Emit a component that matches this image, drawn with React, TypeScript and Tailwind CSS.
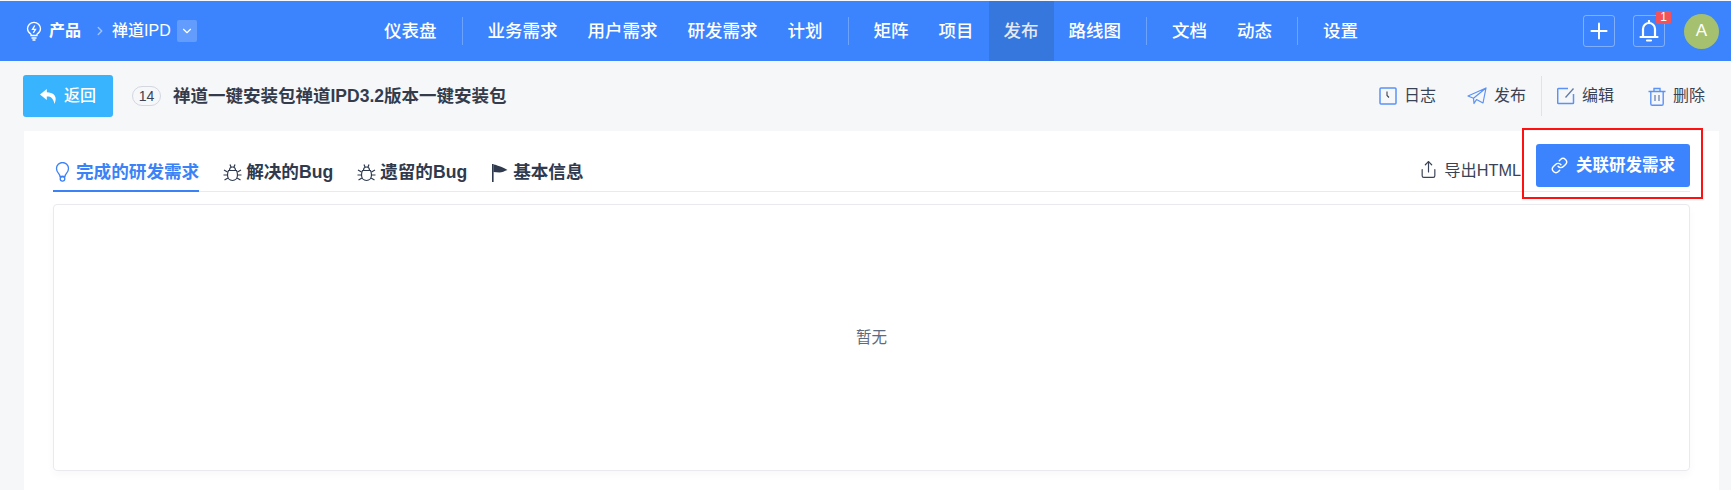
import React from 'react';
import { ChevronDown, ChevronRight, Link, Plus, Share } from 'lucide-react';

const font = { fontFamily: '"Liberation Sans", "Noto Sans CJK SC", sans-serif' };

const NavItem = ({ label, active = false }: { label: string; active?: boolean }) => (
  <a
    className={`h-full flex items-center px-[15px] text-[17.5px] font-medium ${active ? 'bg-[#3577dd] text-[#e4e9f2] font-bold' : 'text-white'}`}
  >
    {label}
  </a>
);

const NavDivider = () => <div className="w-px h-[28px] bg-white/25 mx-[10px]" />;

const ClockSquare = () => (
  <svg width="18" height="18" viewBox="0 0 18 18" fill="none" stroke="#5a92f7" strokeWidth="1.5">
    <rect x="1" y="1" width="16" height="16" rx="1" />
    <path d="M8 4.500v4l2 2" stroke="#3a4355" strokeWidth="1.1" />
  </svg>
);

const PlaneIcon = () => (
  <svg width="20" height="18" viewBox="0 0 20 18" fill="none" stroke="#5a92f7" strokeWidth="1.2" strokeLinejoin="round">
    <path d="M19 1 1 9l5.500 2.200L19 1l-3 15-6.500-3.500L7 16.500l-.5-5.300" />
  </svg>
);

const EditIcon = () => (
  <svg width="18" height="18" viewBox="0 0 18 18" fill="none" stroke="#5a92f7" strokeWidth="1.5">
    <path d="M11 1.500H1.500a.8.8 0 0 0-.8.8v13.400c0 .5.300.8.800.8h14.200c.5 0 .8-.3.800-.8V7" />
    <path d="M16.500 1.500 8.500 10.500" stroke="#5f7aa8" strokeWidth="1.300" />
  </svg>
);

const TrashIcon = () => (
  <svg width="18" height="19" viewBox="0 0 18 19" fill="none" stroke="#5a92f7" strokeWidth="1.4">
    <path d="M.5 4.500h17M6 4.500V1.500h6v3" />
    <path d="M2.800 4.500v12.200c0 1 .6 1.600 1.500 1.600h9.400c.9 0 1.500-.6 1.500-1.600V4.500" />
    <path d="M7 8v6M11 8v6" stroke="#5f7aa8" strokeWidth="1.200" />
  </svg>
);

const BackArrow = () => (
  <svg width="17" height="15" viewBox="0 0 17 15" fill="white">
    <path d="M6.800 0 0 5.600l6.800 5.400V7.600c3.600-.2 6.200.8 7.700 7.400 2.800-6.500.8-11.200-7.700-11.700z" />
  </svg>
);

const BulbBolt = () => (
  <svg width="16" height="20" viewBox="0 0 16 20" fill="none" stroke="white" strokeWidth="1.300">
    <path d="M5 14.500v-1.200C3 12 1.500 10.200 1.500 7.800a6.500 6.500 0 0 1 13 0c0 2.400-1.500 4.200-3.500 5.500v1.200z" />
    <path d="M5.500 17h5M6.500 19h3" />
    <path d="M8.800 4.500 6.500 8.300h3l-2.200 3.500" />
  </svg>
);

const BellIcon = () => (
  <svg width="20" height="22" viewBox="0 0 20 22" fill="none" stroke="white" strokeWidth="2.200">
    <path d="M4 16V9a6 6 0 0 1 12 0v7" />
    <path d="M1.500 17h17" strokeLinecap="round" />
    <path d="M8 20.500h4M10 1v2" strokeLinecap="round" />
  </svg>
);

const BugIcon = () => (
  <svg width="19" height="19" viewBox="0 0 19 19" fill="none" stroke="#2f3a4e" strokeWidth="1.200">
    <path d="M5.500 7.500h8c.8 1.500 1 3 1 4.500 0 3-2 5.500-5 5.500s-5-2.500-5-5.500c0-1.500.2-3 1-4.500z" />
    <path d="M6.500 7.500c0-2 1.200-3.500 3-3.500s3 1.500 3 3.500M7 1.500l1 2.500M12 1.500 11 4" />
    <path d="M1 7l3.500 2M18 7l-3.500 2M.5 12h4M18.500 12h-4M1.500 17l3.500-2M17.500 17 14 15" />
  </svg>
);

const TabBulb = () => (
  <svg width="19" height="20" viewBox="0 0 19 20" fill="none" stroke="#3b82f6" strokeWidth="1.300">
    <path d="M7 14.500c0-3-3.500-3.500-3.500-8a6 6 0 0 1 12 0c0 4.500-3.500 5-3.500 8z" />
    <circle cx="9.500" cy="16.800" r="2.300" />
  </svg>
);

const FlagIcon = () => (
  <svg width="18" height="19" viewBox="0 0 18 19" fill="#2f3a4e">
    <rect x="1" y="1" width="1.600" height="18" />
    <path d="M2.500 1.500c3 0 3.500 1.200 6 1.800 2 .5 4 1.500 8 3.700-3 1-5.500 2.500-8 2.500-2 0-4-.5-6-.5z" />
  </svg>
);

const Action = ({ icon, label }: { icon: React.ReactNode; label: string }) => (
  <button className="flex items-center gap-[7px] text-[16px] text-[#3a4355]">
    {icon}
    <span>{label}</span>
  </button>
);

const Tab = ({ icon, label, active = false }: { icon: React.ReactNode; label: string; active?: boolean }) => (
  <div
    className={`h-[47px] pt-[9px] flex items-center gap-[4px] text-[17.6px] font-bold border-b-2 -mb-px ${
      active ? 'text-[#3b82f6] border-[#3b82f6]' : 'text-[#2f3a4e] border-transparent'
    }`}
  >
    {icon}
    <span>{label}</span>
  </div>
);

export default function App() {
  return (
    <div style={font} className="w-[1731px] h-[490px] overflow-hidden bg-[#f6f7f9]">
      {/* Top nav */}
      <header className="h-[60px] mt-px bg-[#3b84fd] flex items-center relative">
        <div className="w-[369px] pl-[26px] flex items-center text-white text-[16px] shrink-0">
          <BulbBolt />
          <span className="ml-[7px] font-bold">产品</span>
          <ChevronRight size={14} strokeWidth={2.5} className="ml-[12px] mr-[5px] text-white/50" />
          <span className="font-medium">禅道IPD</span>
          <span className="ml-[6px] w-[20px] h-[22px] rounded-[2px] bg-white/20 flex items-center justify-center">
            <ChevronDown size={14} />
          </span>
        </div>
        <nav className="h-full flex items-center flex-1">
          <NavItem label="仪表盘" />
          <NavDivider />
          <NavItem label="业务需求" />
          <NavItem label="用户需求" />
          <NavItem label="研发需求" />
          <NavItem label="计划" />
          <NavDivider />
          <NavItem label="矩阵" />
          <NavItem label="项目" />
          <NavItem label="发布" active />
          <NavItem label="路线图" />
          <NavDivider />
          <NavItem label="文档" />
          <NavItem label="动态" />
          <NavDivider />
          <NavItem label="设置" />
        </nav>
        <div className="flex items-center pr-[12px]">
          <button className="w-[32px] h-[32px] rounded-[3px] border border-white/35 flex items-center justify-center text-white">
            <Plus size={26} strokeWidth={1.8} />
          </button>
          <button className="relative ml-[18px] w-[32px] h-[32px] rounded-[3px] border border-white/35 flex items-center justify-center">
            <BellIcon />
            <span className="absolute -top-[5px] -right-[7px] w-[15px] h-[13px] rounded-[2px] bg-[#f4525a] text-white text-[12px] leading-[13px] text-center">
              1
            </span>
          </button>
          <div className="ml-[19px] w-[35px] h-[35px] rounded-full bg-[#a5c16f] flex items-center justify-center text-white text-[17px]">
            A
          </div>
        </div>
      </header>

      {/* Title row */}
      <div className="h-[70px] flex items-center pl-[23px] pr-[26px]">
        <button className="w-[90px] h-[42px] rounded-[3px] bg-[#38b4fe] text-white text-[16px] font-medium flex items-center justify-center gap-[7px]">
          <BackArrow />
          返回
        </button>
        <span className="ml-[19px] w-[29px] h-[20px] rounded-full border border-[#d4d6e0] text-[#3a4355] text-[14px] flex items-center justify-center">
          14
        </span>
        <h1 className="ml-[12px] text-[17.5px] font-bold text-[#343c4c]">禅道一键安装包禅道IPD3.2版本一键安装包</h1>
        <div className="ml-auto flex items-center">
          <Action icon={<ClockSquare />} label="日志" />
          <div className="ml-[31px]">
            <Action icon={<PlaneIcon />} label="发布" />
          </div>
          <div className="w-px h-[40px] bg-[#e1e3e8] mx-[15px]" />
          <Action icon={<EditIcon />} label="编辑" />
          <div className="ml-[34px]">
            <Action icon={<TrashIcon />} label="删除" />
          </div>
        </div>
      </div>

      {/* Card */}
      <main className="relative ml-[24px] mr-[12px] h-[359px] bg-white pt-[13px] px-[29px]">
        <div className="h-[48px] flex items-end border-b border-[#e9eaef]">
          <div className="flex gap-[24px]">
            <Tab icon={<TabBulb />} label="完成的研发需求" active />
            <Tab icon={<BugIcon />} label="解决的Bug" />
            <Tab icon={<BugIcon />} label="遗留的Bug" />
            <Tab icon={<FlagIcon />} label="基本信息" />
          </div>
          <button className="ml-auto mb-[9px] mr-[15px] flex items-center gap-[6px] text-[16.25px] text-[#3a4355]">
            <Share size={19} strokeWidth={1.5} />
            导出HTML
          </button>
          <button className="mb-[4px] w-[154px] h-[43px] rounded-[3px] bg-[#3b84fd] text-white text-[16.5px] font-bold flex items-center justify-center gap-[8px]">
            <Link size={17} strokeWidth={2} />
            关联研发需求
          </button>
        </div>
        <div className="mt-[12px] h-[267px] rounded-[4px] border border-[#e9eaef] shadow-[0_4px_8px_rgba(0,0,0,0.03)] flex items-center justify-center text-[15.5px] text-[#5d6b82]">
          暂无
        </div>
        {/* red annotation around the button */}
        <div className="absolute left-[1498px] -top-[3px] w-[181px] h-[71px] border-2 border-[#f11]" />
      </main>
    </div>
  );
}
